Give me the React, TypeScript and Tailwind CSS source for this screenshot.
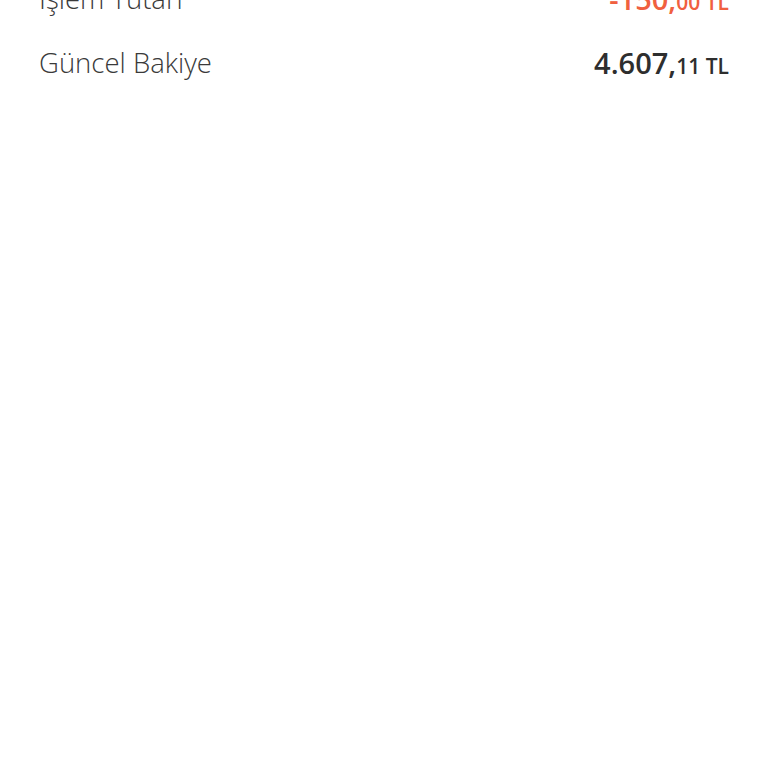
const rows = [
  { label: "İşlem Tutarı", main: "-150,", cents: "00 TL", tone: "text-[#f0603f]" },
  { label: "Güncel Bakiye", main: "4.607,", cents: "11 TL", tone: "text-[#2e2e2e]" },
];

export default function App() {
  return (
    <div className="h-[768px] w-[768px] overflow-hidden bg-white font-['Open_Sans',sans-serif]">
      <div className="-mt-[33px] flex flex-col px-[39px]">
        {rows.map((r) => (
          <div key={r.label} className="flex h-[64px] items-center justify-between">
            <span className="text-[27.5px] font-light text-[#3a3a3a]">{r.label}</span>
            <span className={`font-semibold ${r.tone}`}>
              <span className="text-[29px]">{r.main}</span>
              <span className="text-[21px]">{r.cents}</span>
            </span>
          </div>
        ))}
      </div>
    </div>
  );
}
